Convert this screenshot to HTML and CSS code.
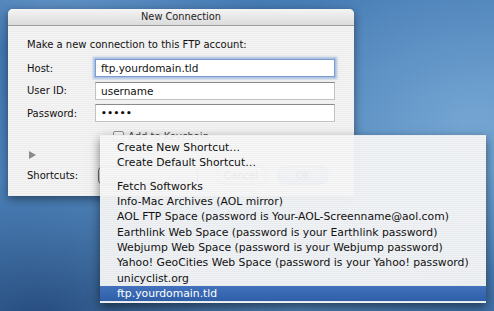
FILE: index.html
```html
<!DOCTYPE html>
<html lang="en">
<head>
	<meta charset="UTF-8">
	<title>New Connection</title>
	<link rel="stylesheet" href="styles.css">
</head>
<body class="desktop">
	<div class="window">
		<div class="titlebar">New Connection</div>
		<div class="pane">
			<p class="prompt">Make a new connection to this FTP account:</p>
			<div class="row">
				<span class="label">Host:</span>
				<div class="field focus">ftp.yourdomain.tld</div>
			</div>
			<div class="row">
				<span class="label">User ID:</span>
				<div class="field">username</div>
			</div>
			<div class="row">
				<span class="label">Password:</span>
				<div class="field secret">&#8226;&#8226;&#8226;&#8226;&#8226;</div>
			</div>
			<div class="keychain"><span class="check"></span>Add to Keychain</div>
			<div class="disclose"></div>
			<div class="row bottom-row">
				<span class="label">Shortcuts:</span>
				<div class="popup"></div>
				<div class="buttons">
					<span class="btn">Cancel</span>
					<span class="btn default">OK</span>
				</div>
			</div>
		</div>
	</div>

	<!-- shortcuts popup menu, open over the dialog -->
	<ul class="menu">
		<li>Create New Shortcut&hellip;</li>
		<li>Create Default Shortcut&hellip;</li>
		<li class="sep"></li>
		<li>Fetch Softworks</li>
		<li>Info-Mac Archives (AOL mirror)</li>
		<li>AOL FTP Space (password is Your-AOL-Screenname@aol.com)</li>
		<li>Earthlink Web Space (password is your Earthlink password)</li>
		<li>Webjump Web Space (password is your Webjump password)</li>
		<li>Yahoo! GeoCities Web Space (password is your Yahoo! password)</li>
		<li>unicyclist.org</li>
		<li class="selected">ftp.yourdomain.tld</li>
	</ul>
</body>
</html>
```

FILE: styles.css
```css
html,body{
	margin:0;
	padding:0;
}
.desktop{
	width:494px;
	height:311px;
	overflow:hidden;
	position:relative;
	font-family:"DejaVu Sans","Liberation Sans",sans-serif;
	font-size:10px;
	color:#111;
	background:
		radial-gradient(ellipse 220px 160px at 470px 120px, rgba(140,185,225,0.55), rgba(140,185,225,0) 100%),
		radial-gradient(ellipse 260px 140px at 40px 320px, rgba(15,45,95,0.7), rgba(15,45,95,0) 100%),
		radial-gradient(ellipse 200px 60px at 60px -10px, rgba(120,165,210,0.6), rgba(120,165,210,0) 100%),
		linear-gradient(160deg, #3f74ae 0%, #4e84bb 45%, #5d92c4 70%, #3e6fa6 100%);
}
/* dialog window */
.window{
	position:absolute;
	left:8px;
	top:9px;
	width:346px;
	height:187px;
	border-radius:5px 5px 0 0;
	background:repeating-linear-gradient(to bottom,#ededed 0,#ededed 1px,#f4f4f4 1px,#f4f4f4 2px);
	box-shadow:0 3px 10px rgba(0,0,0,0.45);
	overflow:hidden;
}
.titlebar{
	height:16px;
	line-height:16px;
	text-align:center;
	font-size:9.8px;
	color:#222;
	background:linear-gradient(to bottom,#f4f4f4,#dcdcdc);
	border-bottom:1px solid #9c9c9c;
}
.pane{
	padding:12px 0 0 19px;
}
.prompt{
	margin:0;
	height:14px;
	line-height:14px;
}
.row{
	display:flex;
	align-items:center;
	height:18px;
	margin-top:4.5px;
}
.prompt + .row{
	margin-top:7px;
}
.label{
	width:68px;
	flex:none;
}
.field{
	box-sizing:border-box;
	width:240px;
	height:18px;
	line-height:16px;
	padding-left:5px;
	font-size:10.5px;
	background:#fff;
	border:1px solid #c2c2c2;
	border-top-color:#8a8a8a;
}
.field.focus{
	border-color:#7d9ccb;
	box-shadow:0 0 0 1px #a9c3e6, 0 0 2px 2px rgba(120,160,215,0.6);
}
.field.secret{
	font-size:9px;
	letter-spacing:0.5px;
	font-weight:bold;
}
.keychain{
	display:flex;
	align-items:center;
	margin:8px 0 0 86px;
	height:12px;
	color:#444;
}
.check{
	box-sizing:border-box;
	width:11px;
	height:11px;
	margin-right:4px;
	border:1px solid #8c8c8c;
	border-radius:2px;
	background:linear-gradient(#fdfdfd,#e2e2e2);
}
.disclose{
	width:0;
	height:0;
	margin:9px 0 0 2px;
	border-left:7px solid #8a8a8a;
	border-top:4px solid transparent;
	border-bottom:4px solid transparent;
}
.bottom-row{
	margin-top:6.5px;
	height:20px;
}
.popup{
	box-sizing:border-box;
	width:100px;
	height:19px;
	margin-left:3px;
	border:1px solid #6a6a6a;
	border-radius:5px;
	background:linear-gradient(#fafafa,#d8d8d8);
}
.buttons{
	display:flex;
	gap:10px;
	margin-left:17px;
}
.btn{
	box-sizing:border-box;
	width:52px;
	height:19px;
	line-height:17px;
	text-align:center;
	border:1px solid #8a8a8a;
	border-radius:10px;
	background:linear-gradient(#fdfdfd,#dedede);
}
.btn.default{
	background:linear-gradient(#bcd6f3,#6aa0dc);
	border-color:#4b7cb8;
}
/* popup menu */
.menu{
	position:absolute;
	left:100px;
	top:135px;
	width:386px;
	height:168px;
	box-sizing:border-box;
	margin:0;
	padding:4.5px 0 0 0;
	list-style:none;
	font-size:10.8px;
	color:#111;
	background:repeating-linear-gradient(to bottom,rgba(240,240,240,0.95) 0,rgba(240,240,240,0.95) 1px,rgba(248,248,248,0.95) 1px,rgba(248,248,248,0.95) 2px);
	box-shadow:0 4px 10px rgba(0,0,0,0.5);
}
.menu li{
	height:15.3px;
	line-height:15.3px;
	padding-left:17px;
	white-space:nowrap;
}
.menu li.sep{
	height:8.7px;
}
.menu li.selected{
	color:#fff;
	background:linear-gradient(#4172bb,#2f5fa8);
}
```
